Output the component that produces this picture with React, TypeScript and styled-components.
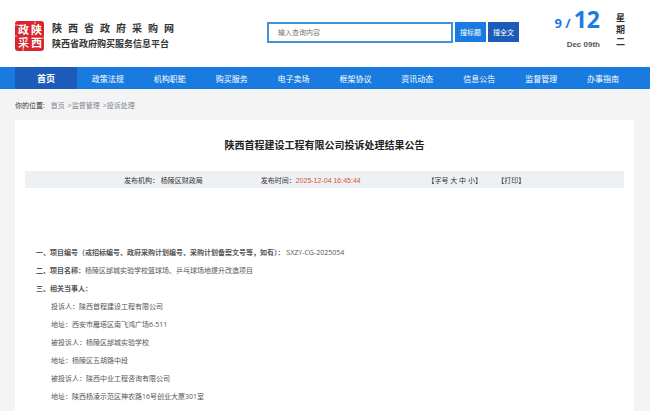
import React from "react";
import styled, { createGlobalStyle } from "styled-components";

const Global = createGlobalStyle`
  * { box-sizing: border-box; }
  body {
    margin: 0;
    background: #f4f4f4;
    color: #333;
    font-family: "Open Sans", "Noto Sans CJK SC", sans-serif;
    font-size: 7px;
  }
  a { color: inherit; text-decoration: none; }
  button, input { font-family: inherit; }
`;

const Page = styled.div`
  display: flex;
  flex-direction: column;
  min-height: 100vh;
`;

const Header = styled.header`
  display: grid;
  grid-template-columns: 252fr 288fr 95fr;
  height: 67px;
  padding: 0 0 0 15px;
  background: #fff;
`;

const Brand = styled.a`
  display: flex;
  align-items: flex-start;
  gap: 8px;
  padding-top: 21px;
`;

const Seal = styled.svg`
  width: 29px;
  height: 30px;
`;

const BrandText = styled.div`
  width: 122px;
  color: #333;
  font-size: 9px;
  font-weight: 700;
  line-height: 18px;
`;

const BrandTitle = styled.div`
  font-size: 10px;
  line-height: 14px;
  text-align-last: justify;
`;

const Search = styled.form`
  display: flex;
  align-items: flex-start;
  gap: 2px;
  padding-top: 22px;
`;

const SearchInput = styled.input`
  width: 186px;
  height: 21px;
  padding: 0 9px;
  border: 2px solid #4290d9;
  border-radius: 0;
  background: #fff;
  font-size: 7px;
  outline: none;
  &::placeholder { color: #757575; }
`;

const SearchButton = styled.button<{ $dark?: boolean }>`
  width: 31px;
  height: 20px;
  padding: 0;
  border: 0;
  background: ${(p) => (p.$dark ? "#1c5bb8" : "#197be0")};
  color: #fff;
  font-size: 7px;
`;

const Today = styled.div`
  display: flex;
  align-items: flex-start;
  gap: 16px;
`;

const DateBlock = styled.div`
  display: flex;
  flex-direction: column;
  align-items: flex-end;
  width: 45px;
  padding-top: 5px;
`;

const DateNumbers = styled.div`
  color: #1b7be0;
  font-weight: 700;
  font-size: 13px;
  line-height: 28px;
  white-space: nowrap;
`;

const Day = styled.span`
  margin-left: 3px;
  font-size: 23px;
`;

const DateLong = styled.div`
  color: #555;
  font-family: "Liberation Sans", sans-serif;
  font-size: 8px;
  font-weight: 700;
  line-height: 16px;
  white-space: nowrap;
`;

const Weekday = styled.div`
  width: 9px;
  padding-top: 12px;
  color: #333;
  font-size: 9px;
  font-weight: 700;
  line-height: 12px;
`;

const Nav = styled.nav`
  display: grid;
  grid-template-columns: repeat(10, 1fr);
  height: 22px;
  padding: 0 16px 0 15px;
  background: #197be0;
`;

const NavLink = styled.a<{ $active?: boolean }>`
  display: flex;
  align-items: center;
  justify-content: center;
  background: ${(p) => (p.$active ? "#1c5bb8" : "transparent")};
  color: #fff;
  font-size: ${(p) => (p.$active ? 9 : 8)}px;
  font-weight: ${(p) => (p.$active ? 700 : 400)};
`;

const Crumbs = styled.nav`
  display: flex;
  align-items: center;
  gap: 3px;
  height: 31px;
  padding: 0 15px;
  color: #808695;
`;

const CrumbLabel = styled.span`
  margin-right: 3px;
  color: #333;
`;

const Panel = styled.main`
  flex: 1;
  margin: 0 16px 0 15px;
  padding: 0 10px;
  background: #fff;
`;

const Title = styled.h1`
  margin: 0;
  color: #222;
  font-size: 10px;
  font-weight: 700;
  line-height: 51px;
  text-align: center;
`;

const Meta = styled.div`
  display: grid;
  grid-template-columns: 137fr 167fr 70fr 127fr;
  align-items: center;
  height: 17px;
  padding-left: 99px;
  background: #edf1f4;
  color: #333;
  white-space: nowrap;
`;

const Time = styled.time`
  color: #e0502c;
  font-family: "Liberation Sans", sans-serif;
`;

const TextButton = styled.button`
  padding: 0;
  border: 0;
  background: none;
  color: inherit;
  font-size: 7px;
`;

const Article = styled.article`
  padding: 56px 11px 0;
  color: #555;
  line-height: 18px;
`;

const Clause = styled.p`
  margin: 0;
`;

const Detail = styled(Clause)`
  padding-left: 15px;
`;

const links = ["首页", "政策法规", "机构职能", "购买服务", "电子卖场", "框架协议", "资讯动态", "信息公告", "监督管理", "办事指南"];

const details = [
  "投诉人：陕西首程建设工程有限公司",
  "地址：西安市雁塔区南飞鸿广场6-511",
  "被投诉人：杨陵区邰城实验学校",
  "地址：杨陵区五胡路中段",
  "被投诉人：陕西中业工程咨询有限公司",
  "地址：陕西杨凌示范区神农路16号创业大厦301室",
];

function SealLogo() {
  return (
    <Seal viewBox="0 0 29 30" role="img" aria-label="陕西政采">
      <rect width="29" height="30" rx="3" fill="#d8262c" />
      <g fill="#fff" fontFamily="Liberation Sans, Noto Sans CJK SC" fontSize="11" fontWeight="700">
        <text x="3" y="13">政</text>
        <text x="16" y="13">陕</text>
        <text x="3" y="26" fontWeight="500">采</text>
        <text x="16" y="26">西</text>
      </g>
      <path d="M0 4h3M20 0v3M8 27v3M27 17h2M0 15h2" stroke="#fff" strokeWidth="1" opacity=".7" />
    </Seal>
  );
}

export default function App() {
  return (
    <Page>
      <Global />
      <Header>
        <Brand href="#">
          <SealLogo />
          <BrandText>
            <BrandTitle>陕西省政府采购网</BrandTitle>
            陕西省政府购买服务信息平台
          </BrandText>
        </Brand>
        <Search onSubmit={(e) => e.preventDefault()}>
          <SearchInput placeholder="输入查询内容" aria-label="输入查询内容" />
          <SearchButton>搜标题</SearchButton>
          <SearchButton $dark>搜全文</SearchButton>
        </Search>
        <Today>
          <DateBlock>
            <DateNumbers>9 /<Day>12</Day></DateNumbers>
            <DateLong>Dec 09th</DateLong>
          </DateBlock>
          <Weekday>星期二</Weekday>
        </Today>
      </Header>
      <Nav>
        {links.map((label, i) => (
          <NavLink key={label} href="#" $active={i === 0}>{label}</NavLink>
        ))}
      </Nav>
      <Crumbs>
        <CrumbLabel>你的位置:</CrumbLabel>
        <a href="#">首页</a>
        <a href="#">&gt;监督管理</a>
        <a href="#">&gt;投诉处理</a>
      </Crumbs>
      <Panel>
        <Title>陕西首程建设工程有限公司投诉处理结果公告</Title>
        <Meta>
          <span>发布机构： 杨陵区财政局</span>
          <span>发布时间：<Time>2025-12-04 16:45:44</Time></span>
          <span>
            【字号 <TextButton>大</TextButton> <TextButton>中</TextButton> <TextButton>小</TextButton>】
          </span>
          <span>【<TextButton>打印</TextButton>】</span>
        </Meta>
        <Article>
          <Clause>
            <strong>一、项目编号（或招标编号、政府采购计划编号、采购计划备案文号等，如有）：</strong>{" "}
            SXZY-CG-2025054
          </Clause>
          <Clause><strong>二、项目名称：</strong>杨陵区邰城实验学校篮球场、乒乓球场地提升改造项目</Clause>
          <Clause><strong>三、相关当事人：</strong></Clause>
          {details.map((text) => (
            <Detail key={text}>{text}</Detail>
          ))}
        </Article>
      </Panel>
    </Page>
  );
}
